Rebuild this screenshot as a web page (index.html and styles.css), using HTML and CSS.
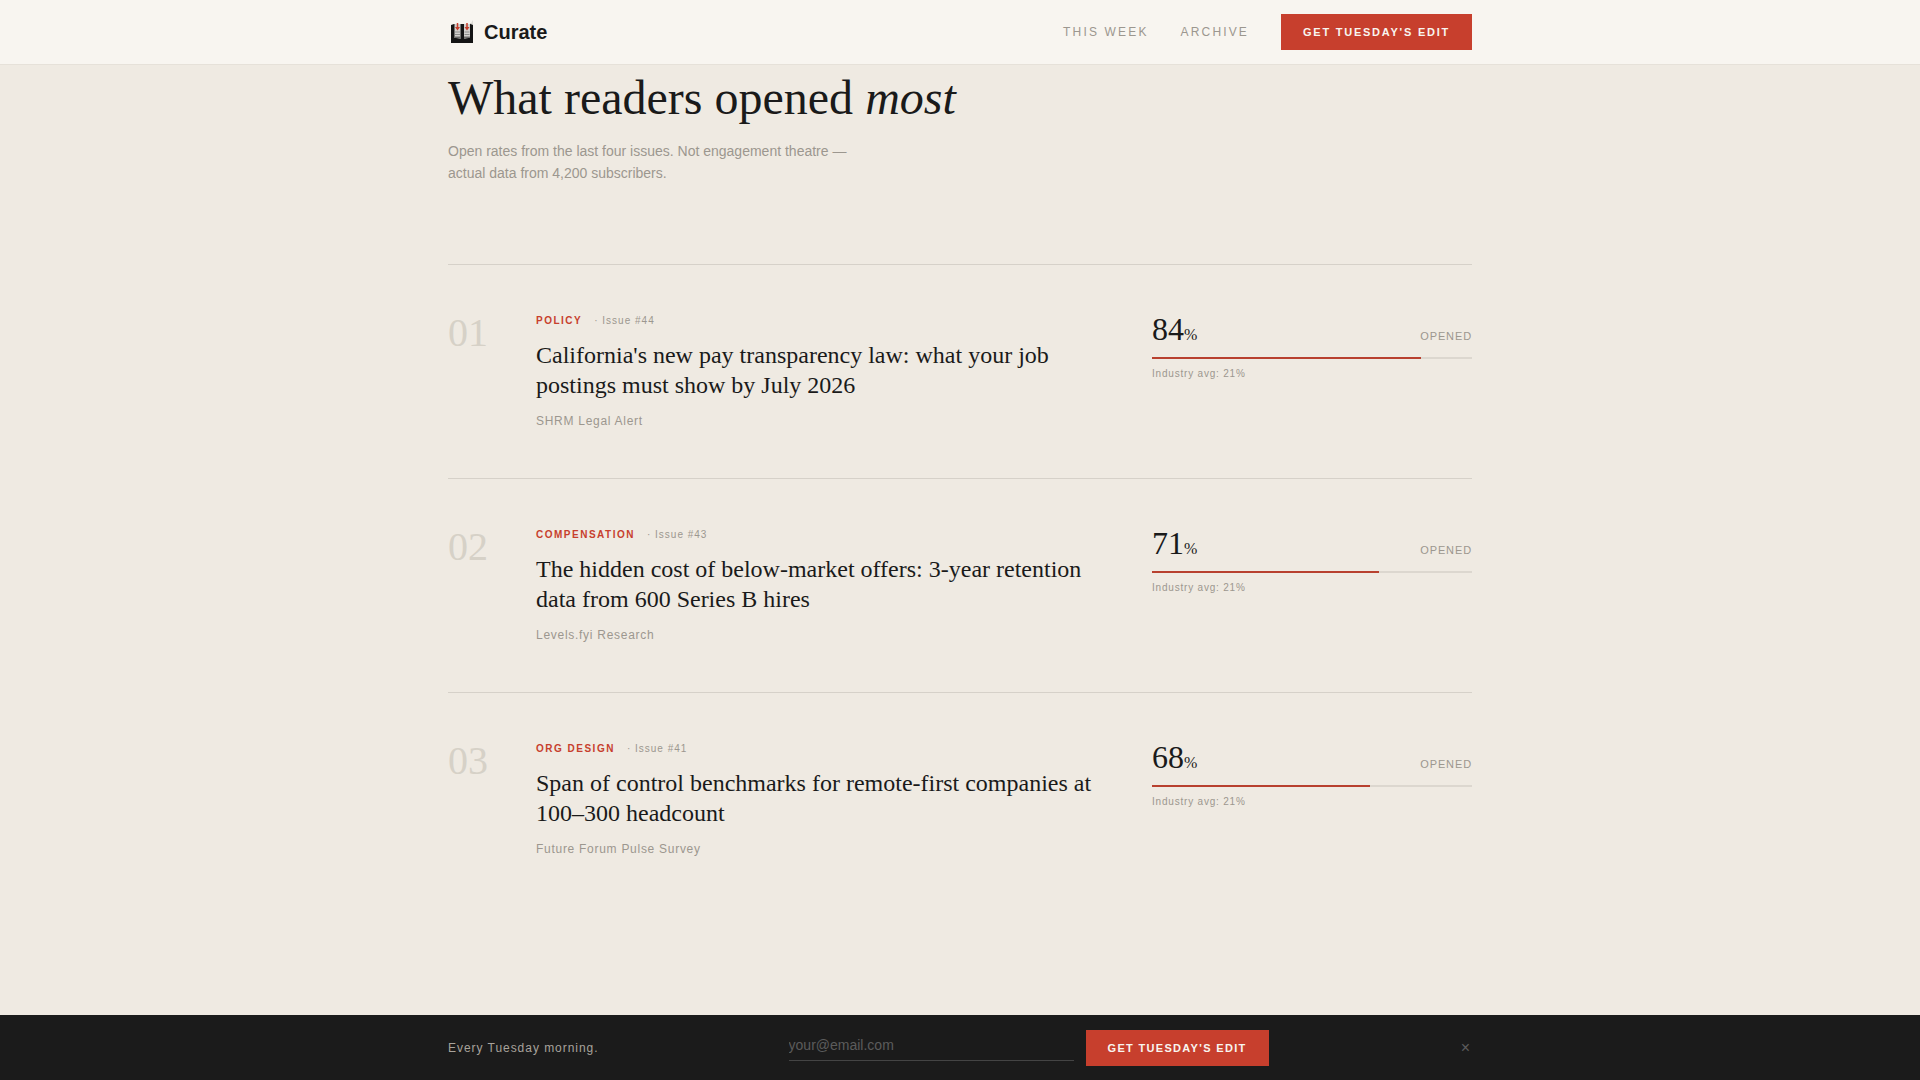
FILE: index.html
```html
<!DOCTYPE html>
<html lang="en">
<head>
    <meta charset="UTF-8">
    <meta name="viewport" content="width=device-width, initial-scale=1.0">
    <title>Curate</title>
    <link rel="stylesheet" href="styles.css">
</head>
<body>
    <header class="site-header">
        <div class="container header-content">
            <a href="#" class="logo">
                <svg class="logo-mark" viewBox="0 0 28 28" aria-hidden="true">
                    <path d="M3 7l3-1h16l3-1v20H3z" fill="#141414"/>
                    <path d="M6.500 6h6v15q-3-1.500-6-1z" fill="#d2d1ce"/>
                    <path d="M16 6h6v14q-3-.5-6 1z" fill="#d2d1ce"/>
                    <path d="M22.500 6L25 2v5z" fill="#dddbd6"/>
                    <path d="M7 14h5M7 16.500h5M16.500 14h5M16.500 16.500h5" stroke="#8d8d8b" stroke-width="1"/>
                    <path d="M6.500 18.500h6V21q-3-1.500-6-1zM16 18.500h6V20q-3-.5-6 1z" fill="#6c6c6a"/>
                    <path d="M9.500 5v6M19 5v6" stroke="#c73f2d" stroke-width="1.500"/>
                    <path d="M7 9h5l-2.500 3.500zM16.500 9h5L19 12.500z" fill="#c73f2d"/>
                </svg>
                <span>Curate</span>
            </a>
            <nav class="nav">
                <a href="#" class="nav-link">This Week</a>
                <a href="#" class="nav-link">Archive</a>
                <a href="#" class="button nav-button">Get Tuesday's Edit</a>
            </nav>
        </div>
    </header>

    <main class="container most-opened">
        <h1 class="section-title">What readers opened <em>most</em></h1>
        <p class="section-intro">Open rates from the last four issues. Not engagement theatre — actual data from 4,200 subscribers.</p>

        <div class="stories">
            <article class="story">
                <div class="rank">01</div>
                <div class="story-body">
                    <div class="story-meta">
                        <span class="category">Policy</span>
                        <span class="issue">· Issue #44</span>
                    </div>
                    <h2 class="story-title">California's new pay transparency law: what your job postings must show by July 2026</h2>
                    <p class="source">SHRM Legal Alert</p>
                </div>
                <div class="stats">
                    <div class="stats-top">
                        <div class="rate">84<span class="percent">%</span></div>
                        <div class="opened">Opened</div>
                    </div>
                    <div class="bar"><div class="bar-fill" style="width: 84%"></div></div>
                    <p class="average">Industry avg: 21%</p>
                </div>
            </article>

            <article class="story">
                <div class="rank">02</div>
                <div class="story-body">
                    <div class="story-meta">
                        <span class="category">Compensation</span>
                        <span class="issue">· Issue #43</span>
                    </div>
                    <h2 class="story-title">The hidden cost of below-market offers: 3-year retention data from 600 Series B hires</h2>
                    <p class="source">Levels.fyi Research</p>
                </div>
                <div class="stats">
                    <div class="stats-top">
                        <div class="rate">71<span class="percent">%</span></div>
                        <div class="opened">Opened</div>
                    </div>
                    <div class="bar"><div class="bar-fill" style="width: 71%"></div></div>
                    <p class="average">Industry avg: 21%</p>
                </div>
            </article>

            <article class="story">
                <div class="rank">03</div>
                <div class="story-body">
                    <div class="story-meta">
                        <span class="category">Org Design</span>
                        <span class="issue">· Issue #41</span>
                    </div>
                    <h2 class="story-title">Span of control benchmarks for remote-first companies at 100–300 headcount</h2>
                    <p class="source">Future Forum Pulse Survey</p>
                </div>
                <div class="stats">
                    <div class="stats-top">
                        <div class="rate">68<span class="percent">%</span></div>
                        <div class="opened">Opened</div>
                    </div>
                    <div class="bar"><div class="bar-fill" style="width: 68%"></div></div>
                    <p class="average">Industry avg: 21%</p>
                </div>
            </article>
        </div>
    </main>

    <!-- Sticky signup bar -->
    <div class="signup-bar">
        <div class="container signup-content">
            <label class="signup-label" for="email">Every Tuesday morning.</label>
            <form class="signup-form">
                <input type="email" id="email" class="email-input" placeholder="your@email.com">
                <button type="submit" class="button">Get Tuesday's Edit</button>
            </form>
            <button type="button" class="close-button" aria-label="Close">×</button>
        </div>
    </div>
</body>
</html>
```

FILE: styles.css
```css
* {
    box-sizing: border-box;
    margin: 0;
    padding: 0;
}

body {
    min-height: 100vh;
    display: flex;
    flex-direction: column;
    font-family: "Liberation Sans", Arial, sans-serif;
    background-color: #efeae2;
    color: #1a1a1a;
}

a {
    color: inherit;
    text-decoration: none;
}

.container {
    width: 100%;
    max-width: 1120px;
    margin: 0 auto;
    padding: 0 48px;
}

/* Header */
.site-header {
    background-color: #f8f5f0;
    border-bottom: 1px solid #e6e1d9;
}

.header-content {
    height: 64px;
    display: flex;
    justify-content: space-between;
    align-items: center;
}

.logo {
    display: flex;
    align-items: center;
    gap: 8px;
    font-size: 20px;
    font-weight: 700;
}

.logo-mark {
    width: 28px;
    height: 28px;
}

.nav {
    display: flex;
    align-items: center;
    gap: 32px;
}

.nav-link {
    font-size: 12px;
    letter-spacing: 0.18em;
    text-transform: uppercase;
    color: #9c978f;
}

.button {
    height: 36px;
    padding: 0 22px;
    display: inline-flex;
    align-items: center;
    justify-content: center;
    background-color: #c73f2d;
    color: #f8f5f0;
    border: none;
    font-family: inherit;
    font-size: 11px;
    font-weight: 700;
    letter-spacing: 0.12em;
    text-transform: uppercase;
    white-space: nowrap;
    cursor: pointer;
}

.nav-button {
    letter-spacing: 0.16em;
}

/* Most opened stories */
.most-opened {
    flex: 1;
    padding-top: 6px;
}

.section-title {
    font-family: "Liberation Serif", "Times New Roman", serif;
    font-size: 48px;
    font-weight: 400;
    line-height: 53px;
}

.section-intro {
    max-width: 400px;
    margin-top: 16px;
    font-size: 14px;
    line-height: 22px;
    color: #9c978f;
}

.stories {
    margin-top: 80px;
}

.story {
    display: grid;
    grid-template-columns: 40px 1fr 320px;
    gap: 48px;
    padding: 48px 0;
    border-top: 1px solid #d6d1c9;
}

.rank {
    font-family: "Liberation Serif", "Times New Roman", serif;
    font-size: 40px;
    line-height: 40px;
    color: #d6d1c7;
}

.story-meta {
    display: flex;
    gap: 12px;
    font-size: 10px;
    line-height: 15px;
}

.category {
    font-weight: 700;
    letter-spacing: 0.15em;
    text-transform: uppercase;
    color: #c73f2d;
}

.issue {
    letter-spacing: 0.1em;
    color: #9c978f;
}

.story-title {
    margin-top: 12px;
    font-family: "Liberation Serif", "Times New Roman", serif;
    font-size: 24px;
    font-weight: 400;
    line-height: 30px;
}

.source {
    margin-top: 12px;
    font-size: 12px;
    line-height: 18px;
    letter-spacing: 0.06em;
    color: #9c978f;
}

.stats-top {
    display: flex;
    justify-content: space-between;
    align-items: baseline;
}

.rate {
    font-family: "Liberation Serif", "Times New Roman", serif;
    font-size: 32px;
    line-height: 32px;
}

.percent {
    font-size: 16px;
    line-height: 16px;
}

.opened {
    font-size: 11px;
    letter-spacing: 0.08em;
    text-transform: uppercase;
    color: #9c978f;
}

.bar {
    height: 2px;
    margin-top: 12px;
    background-color: #dcd7cf;
}

.bar-fill {
    height: 100%;
    background-color: #b8412f;
}

.average {
    margin-top: 8px;
    font-size: 10px;
    line-height: 14px;
    letter-spacing: 0.08em;
    color: #9c978f;
}

/* Signup bar */
.signup-bar {
    position: sticky;
    bottom: 0;
    padding: 15px 0 14px;
    background-color: #1b1b1b;
}

.signup-content {
    display: flex;
    justify-content: space-between;
    align-items: center;
}

.signup-label {
    font-size: 12px;
    letter-spacing: 0.08em;
    color: #a8a39b;
}

.signup-form {
    flex: 0 1 480px;
    display: flex;
    align-items: center;
    gap: 12px;
}

.email-input {
    flex: 1;
    min-width: 0;
    padding: 2px 0 7px;
    background: transparent;
    border: none;
    border-bottom: 1px solid #444;
    color: #f8f5f0;
    font-family: inherit;
    font-size: 14px;
    outline: none;
}

.email-input::placeholder {
    color: #5c5c5c;
}

.close-button {
    padding: 0 2px;
    background: none;
    border: none;
    color: #5c5c5c;
    font-family: inherit;
    font-size: 16px;
    cursor: pointer;
}
```
